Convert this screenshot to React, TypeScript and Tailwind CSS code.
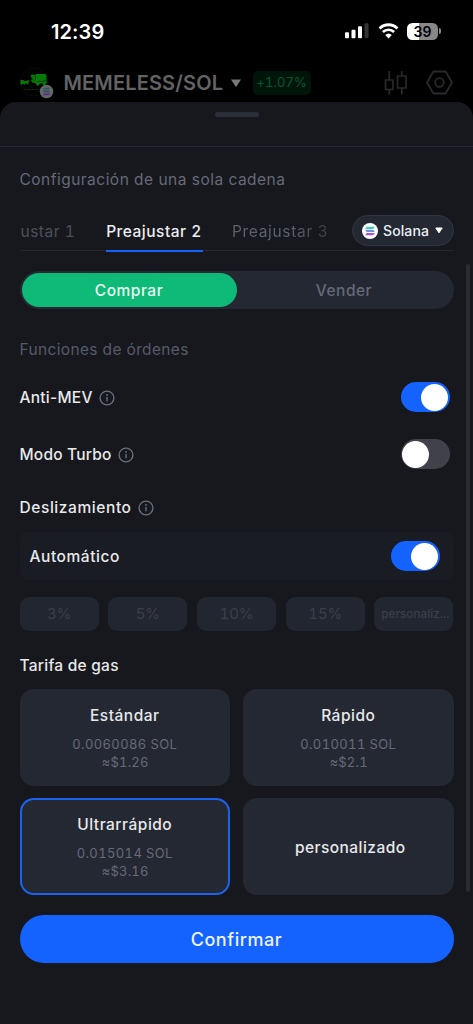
import React from 'react';

function Toggle({ on }: { on: boolean }) {
  return (
    <span
      className={
        on
          ? 'flex h-[30px] w-[49px] items-center justify-end rounded-full bg-[#1563ff] px-[1.5px]'
          : 'flex h-[30px] w-[49px] items-center justify-start rounded-full bg-[#41414c] px-[1.5px]'
      }
    >
      <span className="h-[27px] w-[27px] rounded-full bg-white" />
    </span>
  );
}

function Info() {
  return (
    <svg className="mt-px h-4 w-4 shrink-0" viewBox="0 0 16 16" fill="none">
      <circle cx="8" cy="8" r="6.9" stroke="#68707f" strokeWidth="1.4" />
      <path d="M8 7v4.2" stroke="#68707f" strokeWidth="1.4" />
      <circle cx="8" cy="5" r="0.9" fill="#68707f" />
    </svg>
  );
}

function SolanaMark({ className }: { className: string }) {
  return (
    <svg className={className} viewBox="0 0 16 16">
      <circle cx="8" cy="8" r="8" fill="#fff" />
      <path d="M4.6 3.8h8.2l-1.5 2.3H3.1z" fill="#48c9b5" />
      <path d="M3.1 6.8h8.2l1.5 2.3H4.6z" fill="#6d8fe0" />
      <path d="M4.6 9.900h8.200l-1.500 2.300H3.100z" fill="#a94fe6" />
    </svg>
  );
}

function StatusBar() {
  return (
    <div className="flex h-[62px] items-center justify-between pr-[32px] pl-[51px]">
      <span className="pt-[2px] text-[20px] leading-6 font-semibold tracking-[0.1px] text-white">12:39</span>
      <div className="flex items-center">
        <svg className="h-4 w-6" viewBox="0 0 24 16">
          <rect x="0" y="9.3" width="4" height="6" rx="1" fill="#fff" />
          <rect x="6.5" y="6.8" width="4" height="8.5" rx="1" fill="#fff" />
          <rect x="13" y="3.3" width="4" height="12" rx="1" fill="#fff" />
          <rect x="19.5" y="0.3" width="4" height="15" rx="1" fill="#343434" />
        </svg>
        <svg className="ml-[8.5px] h-4 w-[21px]" viewBox="0 0 21 16">
          <path d="M1.6 5.4a12.7 12.7 0 0 1 17.8 0" fill="none" stroke="#fff" strokeWidth="2.8" />
          <path d="M4.9 9a8 8 0 0 1 11.2 0" fill="none" stroke="#fff" strokeWidth="2.6" />
          <path d="M7.2 12a4.8 4.8 0 0 1 6.6 0L10.5 15.4z" fill="#fff" />
        </svg>
        <div className="ml-[8.5px] flex h-[17px] w-[31px] items-center justify-center rounded-[5.5px] bg-linear-to-r from-white from-39% to-[#888888] to-39%">
          <span className="text-[14px] leading-[17px] font-semibold text-black">39</span>
        </div>
        <span className="ml-px h-[6px] w-[2px] rounded-r-full bg-[#888888]" />
      </div>
    </div>
  );
}

function PairHeader() {
  return (
    <div className="flex h-[40px] items-center pt-px pr-[20px] pl-[20px]">
      <svg className="h-[32px] w-[34px]" viewBox="0 0 34 32">
        <circle cx="14" cy="15" r="14" fill="#010201" stroke="#080b08" />
        <path d="M.5 13h2.5l1.500 1h2l2-1 .5.500-.5 3-.5 1.500-.8-1.500H5l-.5 1.500L3.500 17H2.300l-.8 1.200-1-1.700z" fill="#057a07" />
        <path d="M10.500 8.500l2-1 2 .8 2-1.300h8.500l1.500.8v6.700l1 1.500-1.500.6-1 1.700h-1.800l-.7-1.800h-2.600l-1.400 2h-1.800l-1-2.500-3.500-.6-1.200-1.900 1-1.500z" fill="#057a07" />
        <path d="M11 9.500l2.500 4M15.500 9v4.500M17 14.500l9-.5" stroke="#033c04" strokeWidth=".9" />
        <path d="M4 22.500h20" stroke="#043307" strokeWidth="1" strokeDasharray="2 .7" />
        <circle cx="26.500" cy="24.500" r="6.800" fill="#67676b" />
        <path d="M24 20.700h6l-1.100 1.800h-6z" fill="#245e56" />
        <path d="M22.900 23.600h6l1.100 1.800h-6z" fill="#3b4770" />
        <path d="M24 26.500h6l-1.100 1.800h-6z" fill="#55307a" />
      </svg>
      <span className="ml-[9.5px] w-[160px] pt-px text-[20px] leading-6 font-semibold tracking-[0.15px] whitespace-nowrap text-[#636365]">
        MEMELESS/SOL
      </span>
      <svg className="ml-[6px] h-[8px] w-[12px]" viewBox="0 0 12 8">
        <path d="M1 .5h10L6.6 7.300a.8.8 0 0 1-1.200 0z" fill="#77777a" />
      </svg>
      <span className="ml-[11px] flex h-[24px] w-[58px] items-center justify-center rounded-[5px] bg-[#001509] text-[13.5px] tracking-[-0.2px] text-[#05562f] tabular-nums">
        +1.07%
      </span>
      <svg className="ml-auto h-[26px] w-[24px]" viewBox="0 0 24 26" fill="none" stroke="#29292c" strokeWidth="1.7">
        <path d="M1.500 10h7.500v9.500H1.500zM5.300 1v9M5.300 19.500v5M13.500 6h8.500v12H13.500zM17.700 1v5M17.700 18v6.500" />
      </svg>
      <svg
        className="ml-[18px] h-[26px] w-[27px]"
        viewBox="0 0 27 26"
        fill="none"
        stroke="#29292c"
        strokeWidth="1.8"
        strokeLinejoin="round"
      >
        <path d="M7.400 1.500h12.200L26 12.500l-6.400 11H7.400L1 12.500z" />
        <circle cx="13.500" cy="12.500" r="4.300" />
      </svg>
    </div>
  );
}

function FeeCard({ name, sol, usd, active }: { name: string; sol: string; usd: string; active?: boolean }) {
  return (
    <button
      className={
        active
          ? 'flex h-[97px] flex-col items-center rounded-[14px] bg-[#242832] pt-[17px] ring-2 ring-[#1b62ef] ring-inset'
          : 'flex h-[97px] flex-col items-center rounded-[14px] bg-[#242832] pt-[17px]'
      }
    >
      <span className="text-[15.5px] leading-5 font-medium tracking-[0.5px] text-[#e8e9eb]">{name}</span>
      <span className="mt-[10px] text-[13px] leading-[17.5px] tracking-[0.38px] text-[#656a79] tabular-nums">{sol}</span>
      <span className="pl-px text-[13px] leading-[17.5px] tracking-[0.2px] text-[#656a79] tabular-nums">{usd}</span>
    </button>
  );
}

export default function App() {
  return (
    <div className="flex h-[1024px] w-[473px] flex-col overflow-hidden bg-black font-['Inter','Liberation_Sans',sans-serif]">
      <StatusBar />
      <PairHeader />
      <main className="relative flex flex-1 flex-col rounded-t-[16px] bg-[#17181d]">
        <div className="flex h-[45px] justify-center border-b border-[#252733] pt-[9.5px]">
          <span className="h-[5px] w-[44px] rounded-full bg-[#2a2e3a]" />
        </div>

        <div className="flex flex-col px-[19.5px]">
          <h2 className="mt-[23px] text-[15.5px] leading-5 tracking-[0.48px] text-[#656a79]">
            Configuración de una sola cadena
          </h2>

          <div className="mt-[23px] flex h-[38px] items-start justify-between border-b border-[#25272f]">
            <div className="flex h-[38px] text-[15.5px] leading-[37px] tracking-[0.5px] whitespace-nowrap tabular-nums">
              <span className="w-[86px] pl-[1px] text-[#4b505c]">ustar 1</span>
              <span className="relative w-[97px] text-center font-medium text-[#edeef0]">
                Preajustar 2
                <span className="absolute bottom-[-1px] left-0 h-[2.5px] w-full bg-[#1563ff]" />
              </span>
              <span className="ml-[29.5px] bg-linear-to-r from-[#5d626f] from-60% to-[#383c46] bg-clip-text tracking-[0.68px] text-transparent">
                Preajustar 3
              </span>
            </div>
            <button className="mt-[2px] flex h-[31px] w-[102px] items-center rounded-full border border-[#303642] bg-[#242832] pl-[9.5px]">
              <SolanaMark className="h-4 w-4" />
              <span className="ml-[5px] w-[46px] text-[14px] font-medium tracking-[0.1px] text-[#edeef0]">Solana</span>
              <svg className="ml-[5.5px] h-[7px] w-[8px]" viewBox="0 0 8 7">
                <path d="M.8 1h6.400L4 5.800z" fill="#fff" stroke="#fff" strokeLinejoin="round" />
              </svg>
            </button>
          </div>

          <div className="mt-[20px] grid h-[38px] grid-cols-2 rounded-full bg-[#242832] p-[2px] text-[15.5px] font-medium tracking-[0.5px]">
            <button className="rounded-full bg-[#0fb978] pt-[2px] text-[#e9fbf3]">Comprar</button>
            <button className="pt-[2px] text-[#656a79]">Vender</button>
          </div>

          <h3 className="mt-[31px] text-[15.5px] leading-5 tracking-[0.35px] text-[#555b69]">Funciones de órdenes</h3>

          <div className="mt-[22px] flex h-[30px] items-center pr-[4px] text-[15.5px] font-medium tracking-[0.25px] text-[#e8e9eb]">
            <span className="mr-[6.5px] pt-[2px]">Anti-MEV</span>
            <Info />
            <span className="ml-auto">
              <Toggle on />
            </span>
          </div>
          <div className="mt-[27px] flex h-[30px] items-center pr-[4px] text-[15.5px] font-medium tracking-[0.2px] text-[#e8e9eb]">
            <span className="mr-[6.5px] pt-[2px]">Modo Turbo</span>
            <Info />
            <span className="ml-auto">
              <Toggle on={false} />
            </span>
          </div>
          <div className="mt-[28px] flex h-[20px] items-center text-[15.5px] font-medium tracking-[0.58px] text-[#e8e9eb]">
            <span className="mr-[6.5px] pt-[2px]">Deslizamiento</span>
            <Info />
          </div>
          <div className="mt-[15px] flex h-[48px] items-center justify-between rounded-[8px] bg-[#191c23] pr-[14px] pl-[10px] text-[15.5px] font-medium tracking-[0.55px] text-[#e8e9eb]">
            <span className="pt-[2px]">Automático</span>
            <Toggle on />
          </div>

          <div className="mt-[17px] grid h-[34px] grid-cols-5 gap-[9.5px] text-[15px] tracking-[-0.1px] text-[#3b3f49] tabular-nums">
            <button className="rounded-[9px] bg-[#222630] pt-px">3%</button>
            <button className="rounded-[9px] bg-[#222630] pt-px">5%</button>
            <button className="rounded-[9px] bg-[#222630] pt-px">10%</button>
            <button className="rounded-[9px] bg-[#222630] pt-px">15%</button>
            <button className="rounded-[9px] bg-[#222630] pt-[2px] pl-[3px] text-[11.5px] font-medium tracking-[0.15px]">
              personaliz...
            </button>
          </div>

          <h3 className="mt-[25px] text-[15.5px] leading-5 font-medium tracking-[0.25px] text-[#e8e9eb]">
            Tarifa de gas
          </h3>

          <div className="mt-[13px] grid grid-cols-2 gap-x-[13px] gap-y-[12px]">
            <FeeCard name="Estándar" sol="0.0060086 SOL" usd="≈$1.26" />
            <FeeCard name="Rápido" sol="0.010011 SOL" usd="≈$2.1" />
            <FeeCard name="Ultrarrápido" sol="0.015014 SOL" usd="≈$3.16" active />
            <button className="h-[97px] rounded-[14px] bg-[#242832] pt-[2px] pl-[4px] text-[15.5px] font-medium tracking-[0.45px] text-[#e8e9eb]">
              personalizado
            </button>
          </div>

          <button className="mt-[20px] h-[48px] rounded-full bg-[#1563ff] text-[18px] font-medium tracking-[0.55px] text-[#edf2ff]">
            Confirmar
          </button>
        </div>

        <span className="absolute top-[162px] right-[3px] h-[628px] w-[4px] rounded-full bg-[#2b2c31]" />
      </main>
    </div>
  );
}
